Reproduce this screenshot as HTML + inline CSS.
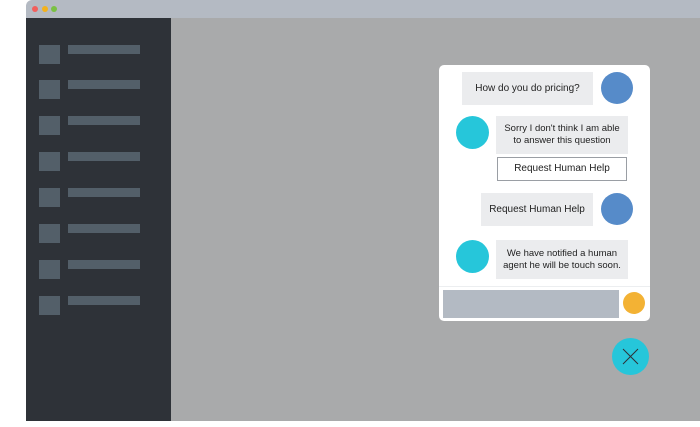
<!DOCTYPE html>
<html><head><meta charset="utf-8"><style>
*{margin:0;padding:0;box-sizing:border-box}
body{width:700px;height:427px;background:#fff;position:relative;overflow:hidden;font-family:"Liberation Sans",sans-serif}
.a{position:absolute}
.top{left:26px;top:0;width:674px;height:18px;background:#b4bac3;border-top-left-radius:6px}
.dot{top:6px;width:6px;height:6px;border-radius:50%}
.side{left:26px;top:18px;width:145px;height:403px;background:#2e3238}
.main{left:171px;top:18px;width:529px;height:403px;background:#a9aaab}
.sq{left:39px;width:21px;height:19px;background:#535f69}
.bar{left:68px;width:72px;height:9px;background:#535f69}
.card{left:439px;top:65px;width:211px;height:256px;background:#fff;border-radius:5px}
.b{background:#ebecee;font-size:10px;color:#222;display:flex;align-items:center;justify-content:center;text-align:center;line-height:12px}
.s{font-size:9.5px}
.c{border-radius:50%}
</style></head><body>
<div class="a top"></div>
<div class="a dot" style="left:32px;background:#f25f5c"></div>
<div class="a dot" style="left:42px;background:#f4b21c"></div>
<div class="a dot" style="left:51px;background:#7ac143"></div>
<div class="a side"></div>
<div class="a main"></div>
<div class="a sq" style="top:45px"></div><div class="a bar" style="top:45px"></div>
<div class="a sq" style="top:80px"></div><div class="a bar" style="top:80px"></div>
<div class="a sq" style="top:116px"></div><div class="a bar" style="top:116px"></div>
<div class="a sq" style="top:152px"></div><div class="a bar" style="top:152px"></div>
<div class="a sq" style="top:188px"></div><div class="a bar" style="top:188px"></div>
<div class="a sq" style="top:224px"></div><div class="a bar" style="top:224px"></div>
<div class="a sq" style="top:260px"></div><div class="a bar" style="top:260px"></div>
<div class="a sq" style="top:296px"></div><div class="a bar" style="top:296px"></div>
<div class="a card"></div>
<div class="a b" style="left:462px;top:72px;width:131px;height:33px">How do you do pricing?</div>
<div class="a c" style="left:601px;top:72px;width:32px;height:32px;background:#568bc9"></div>
<div class="a c" style="left:456px;top:116px;width:33px;height:33px;background:#26c6da"></div>
<div class="a b s" style="left:496px;top:116px;width:132px;height:38px">Sorry I don't think I am able<br>to answer this question</div>
<div class="a b" style="left:497px;top:157px;width:130px;height:24px;background:#fff;border:1.5px solid #9a9ea4">Request Human Help</div>
<div class="a b" style="left:481px;top:193px;width:112px;height:33px">Request Human Help</div>
<div class="a c" style="left:601px;top:193px;width:32px;height:32px;background:#568bc9"></div>
<div class="a c" style="left:456px;top:240px;width:33px;height:33px;background:#26c6da"></div>
<div class="a b s" style="left:496px;top:240px;width:132px;height:39px">We have notified a human<br>agent he will be touch soon.</div>
<div class="a" style="left:439px;top:286px;width:211px;height:1px;background:#eceef0"></div>
<div class="a" style="left:443px;top:290px;width:176px;height:28px;background:#b3bac3"></div>
<div class="a c" style="left:623px;top:292px;width:22px;height:22px;background:#f3b234"></div>
<div class="a c" style="left:612px;top:338px;width:37px;height:37px;background:#26c6da"></div>
<svg class="a" style="left:612px;top:338px" width="37" height="37"><path d="M11 11L26 26M26 11L11 26" stroke="#2e3238" stroke-width="1"/></svg>
</body></html>
